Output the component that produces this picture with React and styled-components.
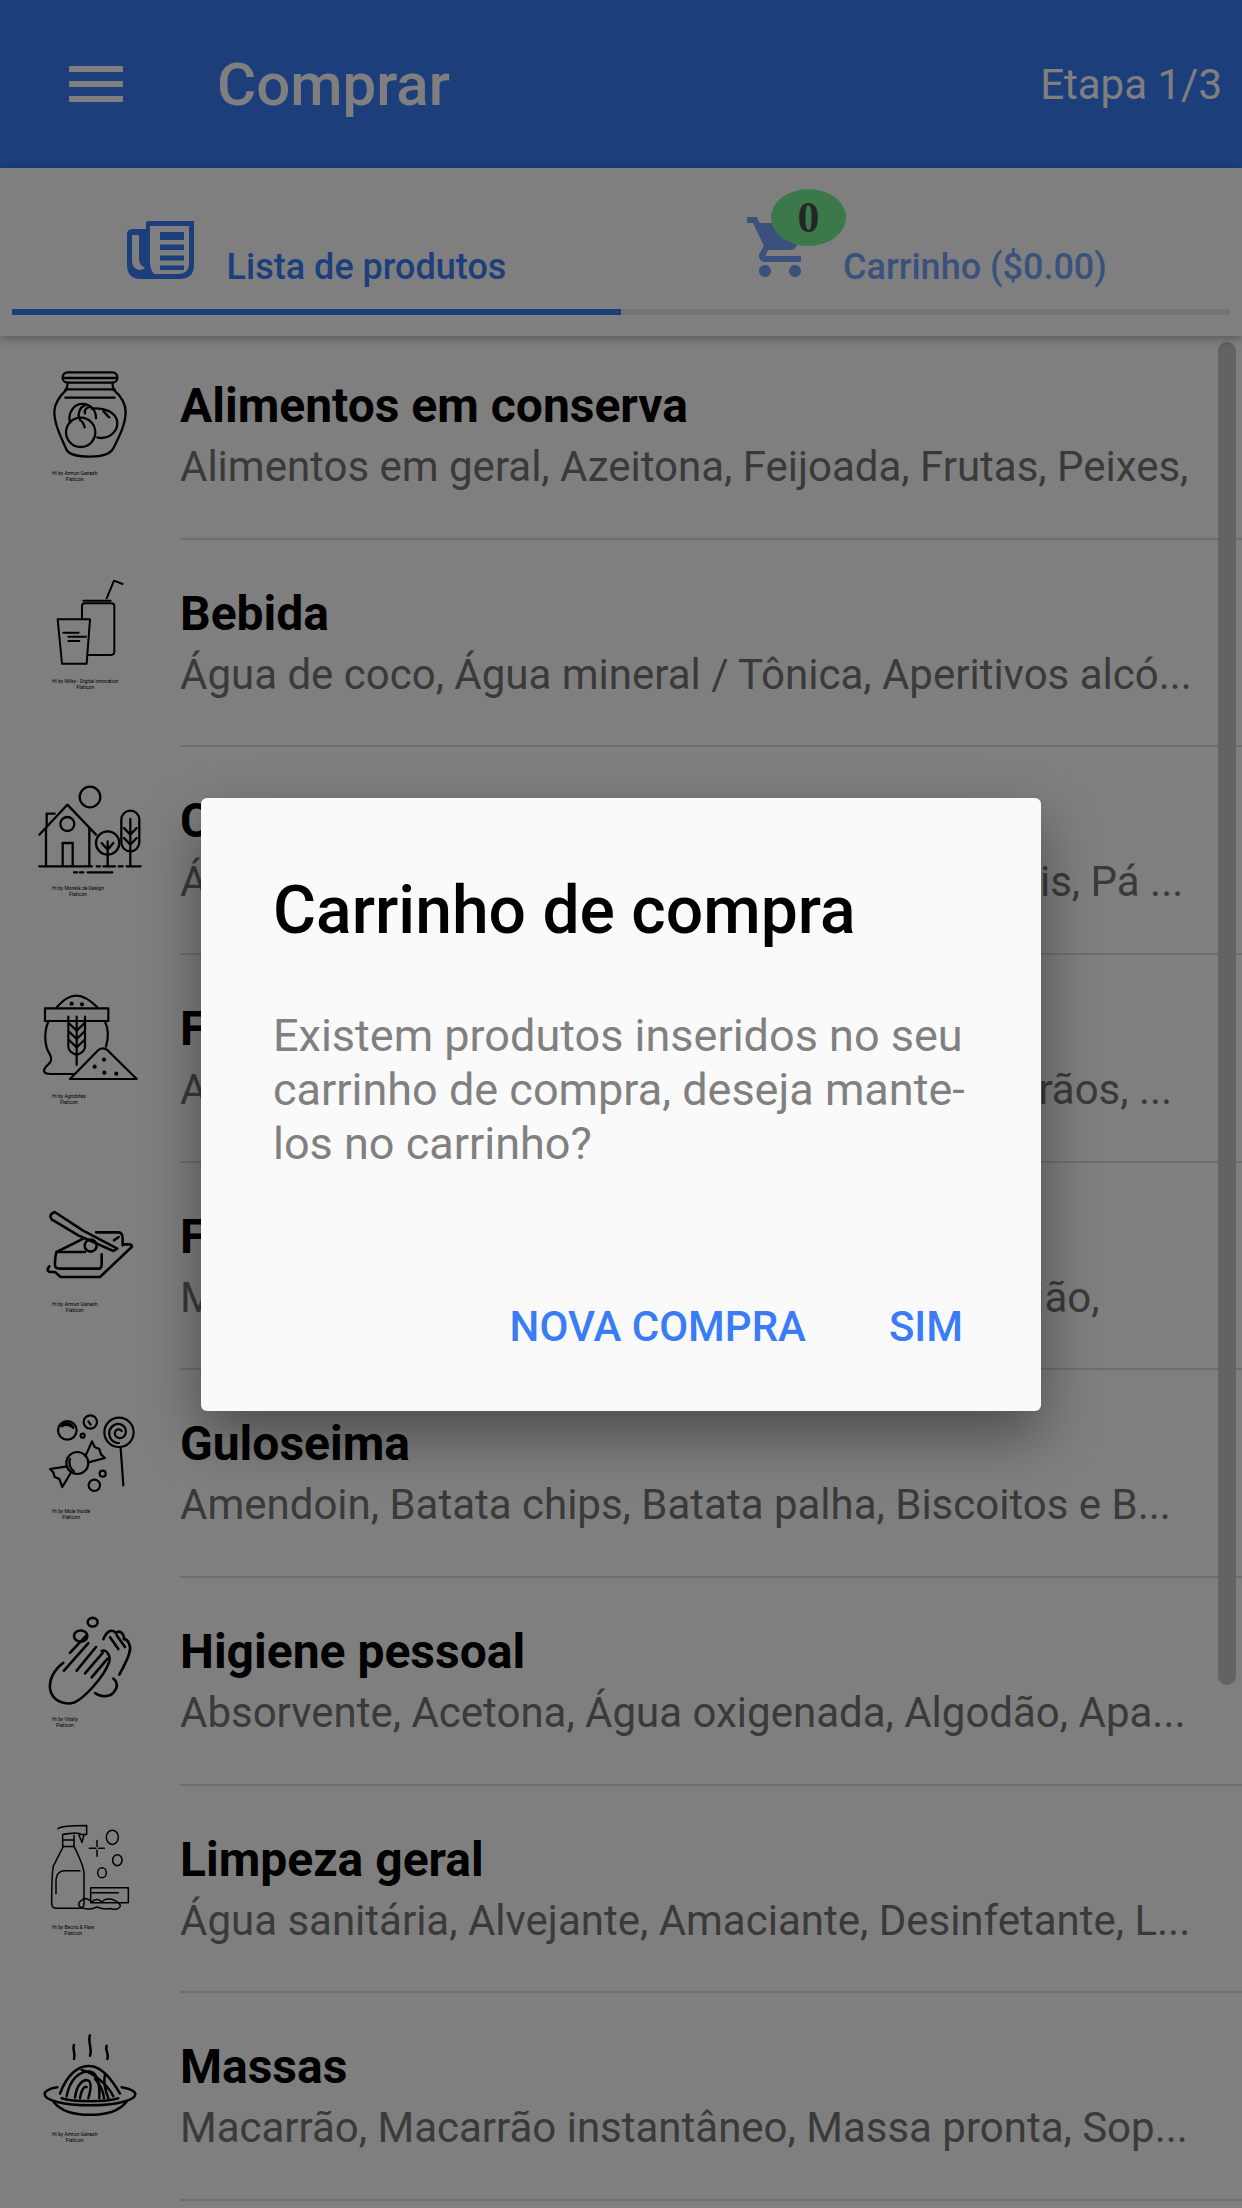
import React from "react";
import styled, { createGlobalStyle } from "styled-components";
import { MdShoppingCart, MdMenu } from "react-icons/md";

const GlobalStyle = createGlobalStyle`
  html, body { margin: 0; padding: 0; background: #fff; }
  * { box-sizing: border-box; }
`;

const JarArt = () => (
  <>
    <rect x="128" y="67" width="164" height="31" rx="15" />
    <path d="M134 84 H286" />
    <path d="M136 118 H284 M136 143 H284" />
    <path d="M143 98 L140 118 C112 145 103 165 103 185 C103 225 125 265 140 300 C150 315 180 320 210 320 C240 320 270 315 280 295 C295 265 317 225 317 185 C317 165 305 140 280 118 L277 98" />
    <circle cx="182" cy="247" r="44" />
    <path d="M150 218 C142 185 165 160 190 162 C215 165 228 182 228 205" />
    <path d="M215 176 C250 172 292 185 292 220 C292 250 260 270 232 262" />
    <path d="M178 205 C172 190 180 172 194 166 M195 190 C192 178 200 172 212 170" />
    <path d="M180 210 C190 215 192 225 194 232 M250 184 C258 190 262 198 268 202" />
  </>
);

const DrinkArt = () => (
  <>
    <path d="M186 806 V768 Q186 760 194 760 H275 Q283 760 283 768 V905 Q283 915 270 915 H205" />
    <path d="M190 752 H272" />
    <path d="M260 745 L282 692 L308 702" />
    <path d="M113 808 H210 L200 941 H126 Z" />
    <path d="M130 848 H176 M145 860 H198 M145 873 H178" />
  </>
);

const FarmArt = () => (
  <>
    <circle cx="210" cy="112" r="31" />
    <path d="M58 225 L142 135 L228 225" />
    <path d="M78 318 V205 M208 318 V205 M80 200 V162 H104" />
    <circle cx="142" cy="193" r="21" />
    <path d="M128 318 V250 H158 V318" />
    <path d="M58 320 H216 M230 320 H240 M250 320 H285 M296 320 H308 M320 320 H362" />
    <path d="M162 338 H172 M180 338 H190 M203 338 H277" />
    <circle cx="263" cy="250" r="35" />
    <path d="M263 318 V245 M245 250 L263 270 L280 250" />
    <rect x="304" y="153" width="54" height="122" rx="27" />
    <path d="M331 318 V178 M312 205 L331 225 L350 205 M312 235 L331 255 L350 235" />
  </>
);

const SackArt = () => (
  <>
    <rect x="75" y="745" width="190" height="38" />
    <path d="M110 742 C135 715 150 707 170 707 C195 707 215 725 232 742" />
    <path d="M85 785 C70 820 75 860 88 880 C100 900 90 910 78 920 C65 935 75 942 90 942 H165" />
    <path d="M255 785 C268 810 265 835 258 860" />
    <path d="M170 770 V915 M145 770 V860 Q145 875 170 885 Q195 875 195 860 V770" />
    <path d="M147 790 L170 812 L193 790 M147 815 L170 837 L193 815 M147 840 L170 862 L193 840" />
    <path d="M150 957 L235 870 Q248 860 262 870 L350 957 Z" />
    <circle cx="155" cy="731" r="3" />
    <circle cx="186" cy="733" r="3" />
    <circle cx="252" cy="899" r="3" />
    <circle cx="224" cy="920" r="3" />
    <circle cx="253" cy="938" r="3" />
    <circle cx="289" cy="941" r="3" />
  </>
);

const ButterArt = () => (
  <>
    <path d="M104 95 L188 150 L292 205 L280 212 L175 165 L95 117 Q84 104 104 95 Z" />
    <path d="M190 175 L110 215 Q105 225 105 255 Q105 265 120 265 H235 Q245 265 245 250 V222" />
    <path d="M110 215 H195 M228 156 H295 Q308 156 308 175 V195" />
    <path d="M88 258 Q76 272 92 275 H105 L122 290 H240 L335 200 Q338 192 325 192 H310" />
    <circle cx="212" cy="196" r="18" />
    <path d="M282 180 L296 170" />
  </>
);

const CandyArt = () => (
  <>
    <circle cx="142" cy="752" r="28" />
    <path d="M125 740 C130 725 155 728 160 745 C150 735 135 735 125 740 Z" />
    <circle cx="211" cy="727" r="20" />
    <path d="M205 725 L212 735" />
    <circle cx="188" cy="768" r="6" />
    <circle cx="248" cy="882" r="9" />
    <circle cx="223" cy="917" r="17" />
    <circle cx="297" cy="758" r="44" />
    <path d="M297 790 C275 790 265 770 268 755 C272 738 290 728 305 735 C320 742 322 765 308 773 C296 780 282 770 285 757 C288 748 300 746 305 754" />
    <path d="M302 805 L310 917" />
    <circle cx="172" cy="850" r="33" />
    <path d="M150 838 C145 850 150 868 162 875" />
    <path d="M142 860 L90 868 L100 878 L104 892 L118 898 L127 922 L152 880" />
    <path d="M196 830 L216 785 L224 802 L238 808 L243 824 L255 835 L205 848" />
  </>
);

const HandsArt = () => (
  <>
    <ellipse cx="218" cy="82" rx="15" ry="11" />
    <ellipse cx="182" cy="117" rx="20" ry="14" />
    <path d="M130 185 C100 205 88 225 90 250 C95 280 130 295 165 285 C190 275 250 225 268 182 C272 165 258 150 245 155" />
    <path d="M132 205 L205 135 M170 205 L228 145 M195 212 L248 160 M215 222 L262 175" />
    <path d="M150 160 L200 115" />
    <path d="M250 125 C262 100 280 100 288 110 C298 100 312 110 312 125 C325 125 335 145 328 160 C322 180 310 195 298 215" />
    <path d="M270 120 L295 150 M290 115 L315 145" />
    <path d="M225 262 C240 272 275 275 285 255 C295 245 290 230 280 225" />
  </>
);

const BottleArt = () => (
  <>
    <path d="M114 605 Q125 597 200 597 V620 H182 Q178 612 128 620 V650 H162 V622" />
    <path d="M128 634 H162" />
    <path d="M176 620 L186 640 L192 620" />
    <path d="M130 650 L100 700 Q95 720 95 795 Q95 807 110 807 H180 Q192 807 192 795 V720 Q192 700 162 650" />
    <path d="M108 770 V735 Q110 712 135 712 H180" />
    <rect x="212" y="755" width="113" height="38" />
    <path d="M215 768 H295" />
    <path d="M185 787 C195 778 210 785 215 792 C225 780 240 785 246 792 C255 778 285 782 300 798 C305 808 285 812 270 808 C255 812 240 806 230 804 C215 812 190 810 178 802 C174 795 178 790 185 787 Z" />
    <circle cx="277" cy="627" r="18" />
    <circle cx="292" cy="685" r="14" />
    <circle cx="246" cy="717" r="13" />
    <path d="M208 655 H228 M236 655 H253 M231 635 V650 M231 660 V675" />
  </>
);

const PastaArt = () => (
  <>
    <path d="M162 1155 C156 1165 168 1178 162 1190 M210 1130 C202 1145 218 1165 210 1182 M260 1157 C254 1167 268 1178 262 1190" />
    <path d="M112 1262 C90 1265 74 1270 74 1280 C74 1295 130 1308 210 1308 C290 1308 346 1295 346 1280 C346 1270 325 1265 305 1262" />
    <path d="M100 1298 Q130 1332 210 1332 Q290 1332 320 1298" />
    <path d="M120 1278 C140 1232 175 1205 210 1208 C250 1210 280 1250 300 1278" />
    <path d="M140 1285 C150 1240 180 1220 210 1222 C232 1225 240 1255 238 1290" />
    <path d="M165 1288 C170 1255 190 1240 205 1245 C215 1250 212 1270 205 1290" />
    <path d="M255 1228 C250 1250 255 1270 265 1290 M185 1218 C215 1225 260 1250 280 1285" />
    <path d="M180 1290 C185 1265 195 1258 200 1262 M225 1240 C235 1250 250 1270 252 1290" />
    <path d="M125 1290 C160 1300 260 1300 295 1290" />
  </>
);

const categories = [
  {
    art: JarArt, y: 48, scale: 300, weight: 2.3,
    credit: "Hi by Amrun Ganesh",
    title: "Alimentos em conserva",
    items: "Alimentos em geral, Azeitona, Feijoada, Frutas, Peixes,",
  },
  {
    art: DrinkArt, y: 672, scale: 300, weight: 2,
    credit: "Hi by Milky - Digital Innovation",
    title: "Bebida",
    items: "Água de coco, Água mineral / Tônica, Aperitivos alcó...",
  },
  {
    art: FarmArt, y: 64, scale: 300, weight: 2.3,
    credit: "Hi by Monkik de Design",
    title: "Casa e jardim",
    items: "Ácido, Adubos, Lã, Carvão, Ferramentas, Móveis, Pá ...",
  },
  {
    art: SackArt, y: 687, scale: 300, weight: 2.2,
    credit: "Hi by Agrobites",
    title: "Farinhas e cereais",
    items: "Açúcar, Amido, Arroz, Aveia, Farinhas, Milho, Grãos, ...",
  },
  {
    art: ButterArt, y: 50, scale: 300, weight: 2.6,
    credit: "Hi by Amrun Ganesh",
    title: "Frios e laticínios",
    items: "Manteiga, Margarina, Sal, Queijo, Leite, Requeijão,",
  },
  {
    art: CandyArt, y: 673, scale: 300, weight: 2.2,
    credit: "Hi by Mole Inside",
    title: "Guloseima",
    items: "Amendoin, Batata chips, Batata palha, Biscoitos e B...",
  },
  {
    art: HandsArt, y: 56, scale: 254, weight: 2.6,
    credit: "Hi by Vitaliy",
    title: "Higiene pessoal",
    items: "Absorvente, Acetona, Água oxigenada, Algodão, Apa...",
  },
  {
    art: BottleArt, y: 583, scale: 254, weight: 1.5,
    credit: "Hi by Becris & Flaw",
    title: "Limpeza geral",
    items: "Água sanitária, Alvejante, Amaciante, Desinfetante, L...",
  },
  {
    art: PastaArt, y: 1109, scale: 254, weight: 2.5,
    credit: "Hi by Amrun Ganesh",
    title: "Massas",
    items: "Macarrão, Macarrão instantâneo, Massa pronta, Sop...",
  },
];

const App = () => {
  return (
    <Page>
      <GlobalStyle />
      <Header>
        <MenuButton><MdMenu /></MenuButton>
        <HeaderTitle>Comprar</HeaderTitle>
        <StepLabel>Etapa 1/3</StepLabel>
      </Header>

      <TabBar>
        <Tab $active>
          <TabBody>
            <NewsIcon width="67" height="58" viewBox="0 0 67 58">
              <path fill="#397cf6" d="M22 0 H67 V44 Q67 58 52 58 H14 Q0 58 0 44 V13 Q0 8 6 8 H19 V2 Q19 0 22 0 Z" />
              <path fill="#fff" d="M5 14 H12 V38 Q12 44 18 47 Q15 49.5 12 49 Q5 47 5 40 Z" />
              <path fill="#fff" d="M23 5 H62 V43 Q62 53 50 53 H27 Q23 48 23 42 Z" />
              <rect x="33" y="11" width="24" height="8" fill="#397cf6" />
              <rect x="33" y="23.5" width="24" height="5.5" fill="#397cf6" />
              <rect x="33" y="34.5" width="24" height="5" fill="#397cf6" />
              <rect x="33" y="44.5" width="24" height="4.5" fill="#397cf6" />
            </NewsIcon>
            <TabLabel>Lista de produtos</TabLabel>
          </TabBody>
          <TabLine $active />
        </Tab>
        <Tab>
          <TabBody>
            <CartIcon>
              <MdShoppingCart />
              <Badge>0</Badge>
            </CartIcon>
            <TabLabel>Carrinho ($0.00)</TabLabel>
          </TabBody>
          <TabLine />
        </Tab>
      </TabBar>

      <List>
        {categories.map((cat) => {
          const Art = cat.art;
          return (
            <Row key={cat.title}>
              <IconCell>
                <IconArt $weight={cat.weight} viewBox={`30 ${cat.y} 360 ${cat.scale}`} preserveAspectRatio="none">
                  <Art />
                </IconArt>
                <Credit>{cat.credit}<br />Flaticon</Credit>
              </IconCell>
              <RowText>
                <RowTitle>{cat.title}</RowTitle>
                <RowItems>{cat.items}</RowItems>
              </RowText>
            </Row>
          );
        })}
      </List>
      <ScrollThumb />

      <Backdrop>
        <Dialog>
          <DialogTitle>Carrinho de compra</DialogTitle>
          <DialogText>
            Existem produtos inseridos no seu<br />
            carrinho de compra, deseja mante-<br />
            los no carrinho?
          </DialogText>
          <DialogActions>
            <DialogButton>Nova compra</DialogButton>
            <DialogButton>Sim</DialogButton>
          </DialogActions>
        </Dialog>
      </Backdrop>
    </Page>
  );
};

const Page = styled.div`
  position: relative;
  width: 1242px;
  height: 2208px;
  overflow: hidden;
  background: #fff;
  font-family: Roboto, "Liberation Sans", sans-serif;
`;

const Header = styled.header`
  display: flex;
  align-items: center;
  height: 168px;
  padding: 0 20px 0 60px;
  background: #397cf6;
  color: #fff;
`;

const MenuButton = styled.div`
  display: flex;
  width: 72px;
  height: 72px;
  font-size: 72px;
  color: #fff;
`;

const HeaderTitle = styled.h1`
  flex: 1;
  margin: 0 0 0 85px;
  font-size: 60px;
  font-weight: 500;
`;

const StepLabel = styled.span`
  font-size: 42px;
`;

const TabBar = styled.nav`
  position: relative;
  z-index: 1;
  display: flex;
  height: 168px;
  padding: 0 12px;
  background: #fff;
  box-shadow: 0 3px 9px rgba(0, 0, 0, 0.3);
`;

const Tab = styled.div`
  flex: 1;
  opacity: ${(p) => (p.$active ? 1 : 0.7)};
`;

const TabBody = styled.div`
  display: flex;
  justify-content: center;
  align-items: flex-end;
  gap: 32px;
  height: 141px;
  padding-bottom: 22px;
`;

const NewsIcon = styled.svg`
  margin: 0 1px 8px 0;
`;

const TabLabel = styled.span`
  font-size: 36px;
  font-weight: 500;
  line-height: 40px;
  color: #397cf6;
`;

const TabLine = styled.div`
  height: 6px;
  background: ${(p) => (p.$active ? "#397cf6" : "#dcdcdc")};
`;

const CartIcon = styled.div`
  position: relative;
  width: 72px;
  height: 72px;
  margin: 0 -5px 4px 0;
  font-size: 72px;
  line-height: 0;
  color: #397cf6;
`;

const Badge = styled.span`
  position: absolute;
  left: 27px;
  top: -22px;
  display: flex;
  justify-content: center;
  align-items: center;
  width: 75px;
  height: 57px;
  border-radius: 50%;
  background: #3eef69;
  font-family: "Liberation Serif", serif;
  font-size: 44px;
  font-weight: 700;
  line-height: 1;
  color: #000;
`;

const List = styled.div`
  display: flex;
  flex-direction: column;
  margin-top: -4px;
`;

const Row = styled.div`
  display: flex;
  flex: none;
  height: 207.67px;
`;

const IconCell = styled.div`
  flex: none;
  width: 180px;
  padding: 34px 0 0 30px;
`;

const IconArt = styled.svg`
  display: block;
  width: 120px;
  height: 100px;
  fill: none;
  stroke: #000;
  stroke-linecap: round;
  stroke-linejoin: round;
  & * {
    stroke-width: ${(p) => p.$weight}px;
    vector-effect: non-scaling-stroke;
  }
`;

const Credit = styled.div`
  display: inline-block;
  margin: -2px 0 0 22px;
  font-size: 5px;
  line-height: 6px;
  text-align: center;
  color: #000;
  white-space: nowrap;
`;

const RowText = styled.div`
  flex: 1;
  min-width: 0;
  padding-top: 44px;
  border-bottom: 2px solid #dcdcdc;
`;

const RowTitle = styled.div`
  font-size: 48px;
  font-weight: 700;
  line-height: 60px;
  color: #000;
`;

const RowItems = styled.div`
  margin-top: 1px;
  font-size: 42px;
  line-height: 60px;
  color: #757575;
  white-space: nowrap;
  overflow: hidden;
`;

const ScrollThumb = styled.div`
  position: absolute;
  left: 1218px;
  top: 342px;
  width: 18px;
  height: 1343px;
  border-radius: 9px;
  background: #c6c6c6;
`;

const Backdrop = styled.div`
  position: absolute;
  inset: 0;
  z-index: 2;
  background: rgba(0, 0, 0, 0.5);
`;

const Dialog = styled.div`
  position: absolute;
  left: 201px;
  top: 798px;
  display: flex;
  flex-direction: column;
  width: 840px;
  height: 613px;
  padding: 78px 60px 0 72px;
  border-radius: 6px;
  background: #fafafa;
  box-shadow: 0 24px 57px rgba(0, 0, 0, 0.4);
`;

const DialogTitle = styled.h2`
  margin: 0;
  font-size: 66px;
  font-weight: 500;
  line-height: 70px;
  color: #000;
`;

const DialogText = styled.p`
  margin: 63px 0 0;
  font-size: 45px;
  line-height: 54px;
  color: #808080;
`;

const DialogActions = styled.div`
  display: flex;
  justify-content: flex-end;
  gap: 83px;
  margin: auto 18px 59px 0;
`;

const DialogButton = styled.span`
  font-size: 42px;
  font-weight: 500;
  line-height: 50px;
  text-transform: uppercase;
  color: #397cf6;
`;

export default App;
